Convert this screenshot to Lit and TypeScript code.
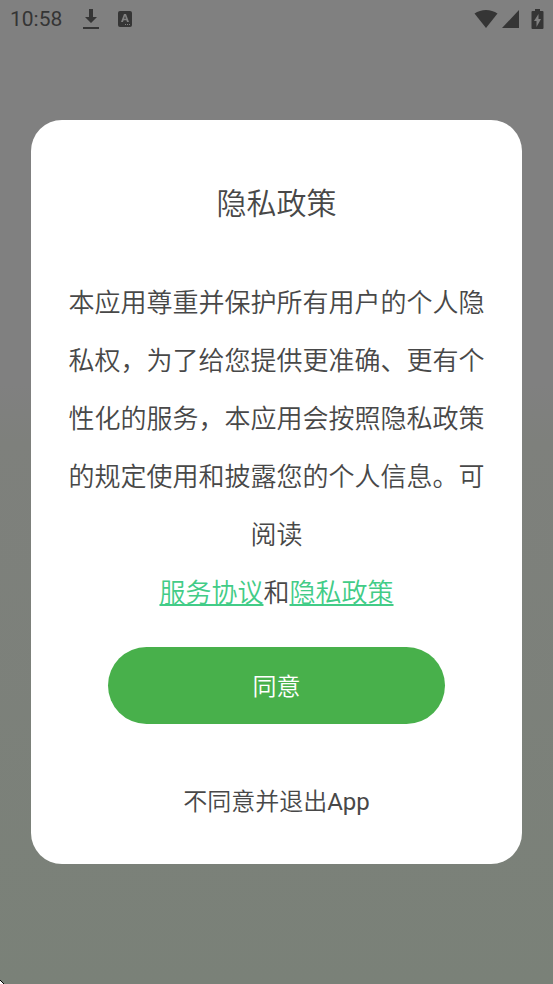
import { LitElement, css, html } from "lit";
import { customElement, state } from "lit/decorators.js";

@customElement("status-bar")
class StatusBar extends LitElement {
  static styles = css`
    :host {
      display: flex;
      align-items: center;
      justify-content: space-between;
      height: 38px;
      padding: 0 9px 0 10px;
      box-sizing: border-box;
      color: #353535;
      font: 450 21px/38px Roboto, sans-serif;
    }
    .group {
      display: flex;
      align-items: center;
    }
    .download {
      margin-left: 21px;
    }
    .app {
      margin-left: 18px;
    }
    .signal {
      margin: 0 12px 0 4px;
    }
    svg {
      display: block;
      fill: currentColor;
    }
    .cut {
      fill: #808080;
    }
  `;

  render() {
    return html`
      <div class="group">
        <span>10:58</span>
        <svg class="download" width="16" height="22" viewBox="0 0 16 22" aria-hidden="true">
          <path d="M6 1h4v8h4l-6 6-6-6h4zM0 19h16v2H0z" />
        </svg>
        <svg class="app" width="16" height="16" viewBox="0 0 16 16" aria-hidden="true">
          <rect x="1" width="14" height="16" rx="2" />
          <path class="cut" fill-rule="evenodd" d="M7 3h2l3 8h-2l-.6-1.800H6.600L6 11H4zM8 5l-.9 2.800h1.800zM8 13h1v1H8zM10 13h1v1h-1zM12 13h1v1h-1z" />
        </svg>
      </div>
      <div class="group">
        <svg width="24" height="20" viewBox="0 0 24 20" aria-hidden="true">
          <path d="M.5 4.500C7-.2 17-.2 23.500 4.500L12 19z" />
        </svg>
        <svg class="signal" width="17" height="18" viewBox="0 0 17 18" aria-hidden="true">
          <path d="M17 0v18H0z" />
        </svg>
        <svg width="13" height="20" viewBox="0 0 13 20" aria-hidden="true">
          <path d="M4 0h5v2h2.500a1 1 0 0 1 1 1v16a1 1 0 0 1-1 1h-10a1 1 0 0 1-1-1V3a1 1 0 0 1 1-1H4z" />
          <path class="cut" d="M7.500 5v5H10l-4.500 8v-6H3z" />
        </svg>
      </div>
    `;
  }
}

@customElement("app-root")
class AppRoot extends LitElement {
  static styles = css`
    :host {
      display: grid;
      position: relative;
      min-height: 100vh;
      align-items: center;
      background: linear-gradient(#808080 0%, #808080 39%, #7e807c 45%, #7a8178 100%);
      color: #484848;
      font-family: Roboto, "Noto Sans CJK SC", sans-serif;
      font-weight: 350;
    }
    .status {
      position: absolute;
      top: 0;
      left: 0;
      right: 0;
    }
    .corner {
      position: absolute;
      left: 0;
      bottom: 0;
    }
    .dialog {
      display: flex;
      flex-direction: column;
      align-items: center;
      margin: 0 31px;
      padding: 60px 32px 34px;
      border-radius: 31px;
      background: #fff;
      text-align: center;
    }
    .title {
      margin: 0;
      font-size: 30px;
      line-height: 48px;
      font-weight: inherit;
    }
    .text {
      margin: 46px 0 25px;
      font-size: 26px;
      line-height: 58px;
    }
    .link {
      color: #42cc87;
    }
    .agree,
    .decline {
      border: 0;
      font: inherit;
      font-size: 24px;
      cursor: pointer;
    }
    .agree {
      width: 79%;
      height: 77px;
      padding: 0 0 2px;
      border-radius: 39px;
      background: #48b04b;
      color: #fff;
    }
    .decline {
      margin-top: 45px;
      height: 61px;
      background: none;
      color: inherit;
    }
    .latin {
      font-weight: 400;
    }
  `;

  @state() private open = true;

  private close() {
    this.open = false;
  }

  render() {
    return html`
      <status-bar class="status"></status-bar>
      ${this.open
        ? html`
            <section class="dialog" role="dialog" aria-labelledby="title">
              <h1 class="title" id="title">隐私政策</h1>
              <p class="text">
                本应用尊重并保护所有用户的个人隐私权，为了给您提供更准确、更有个性化的服务，本应用会按照隐私政策的规定使用和披露您的个人信息。可阅读<br />
                <a class="link" href="#terms">服务协议</a>和<a class="link" href="#privacy">隐私政策</a>
              </p>
              <button class="agree" @click=${this.close}>同意</button>
              <button class="decline" @click=${this.close}>不同意并退出<span class="latin">App</span></button>
            </section>
          `
        : null}
      <svg class="corner" width="4" height="4" viewBox="0 0 4 4" aria-hidden="true">
        <path d="M0 0h1v1h1v1h1v1h1v1H0z" />
        <path fill="#fff" d="M0 1h1v1h1v1h1v1H0z" />
      </svg>
    `;
  }
}
